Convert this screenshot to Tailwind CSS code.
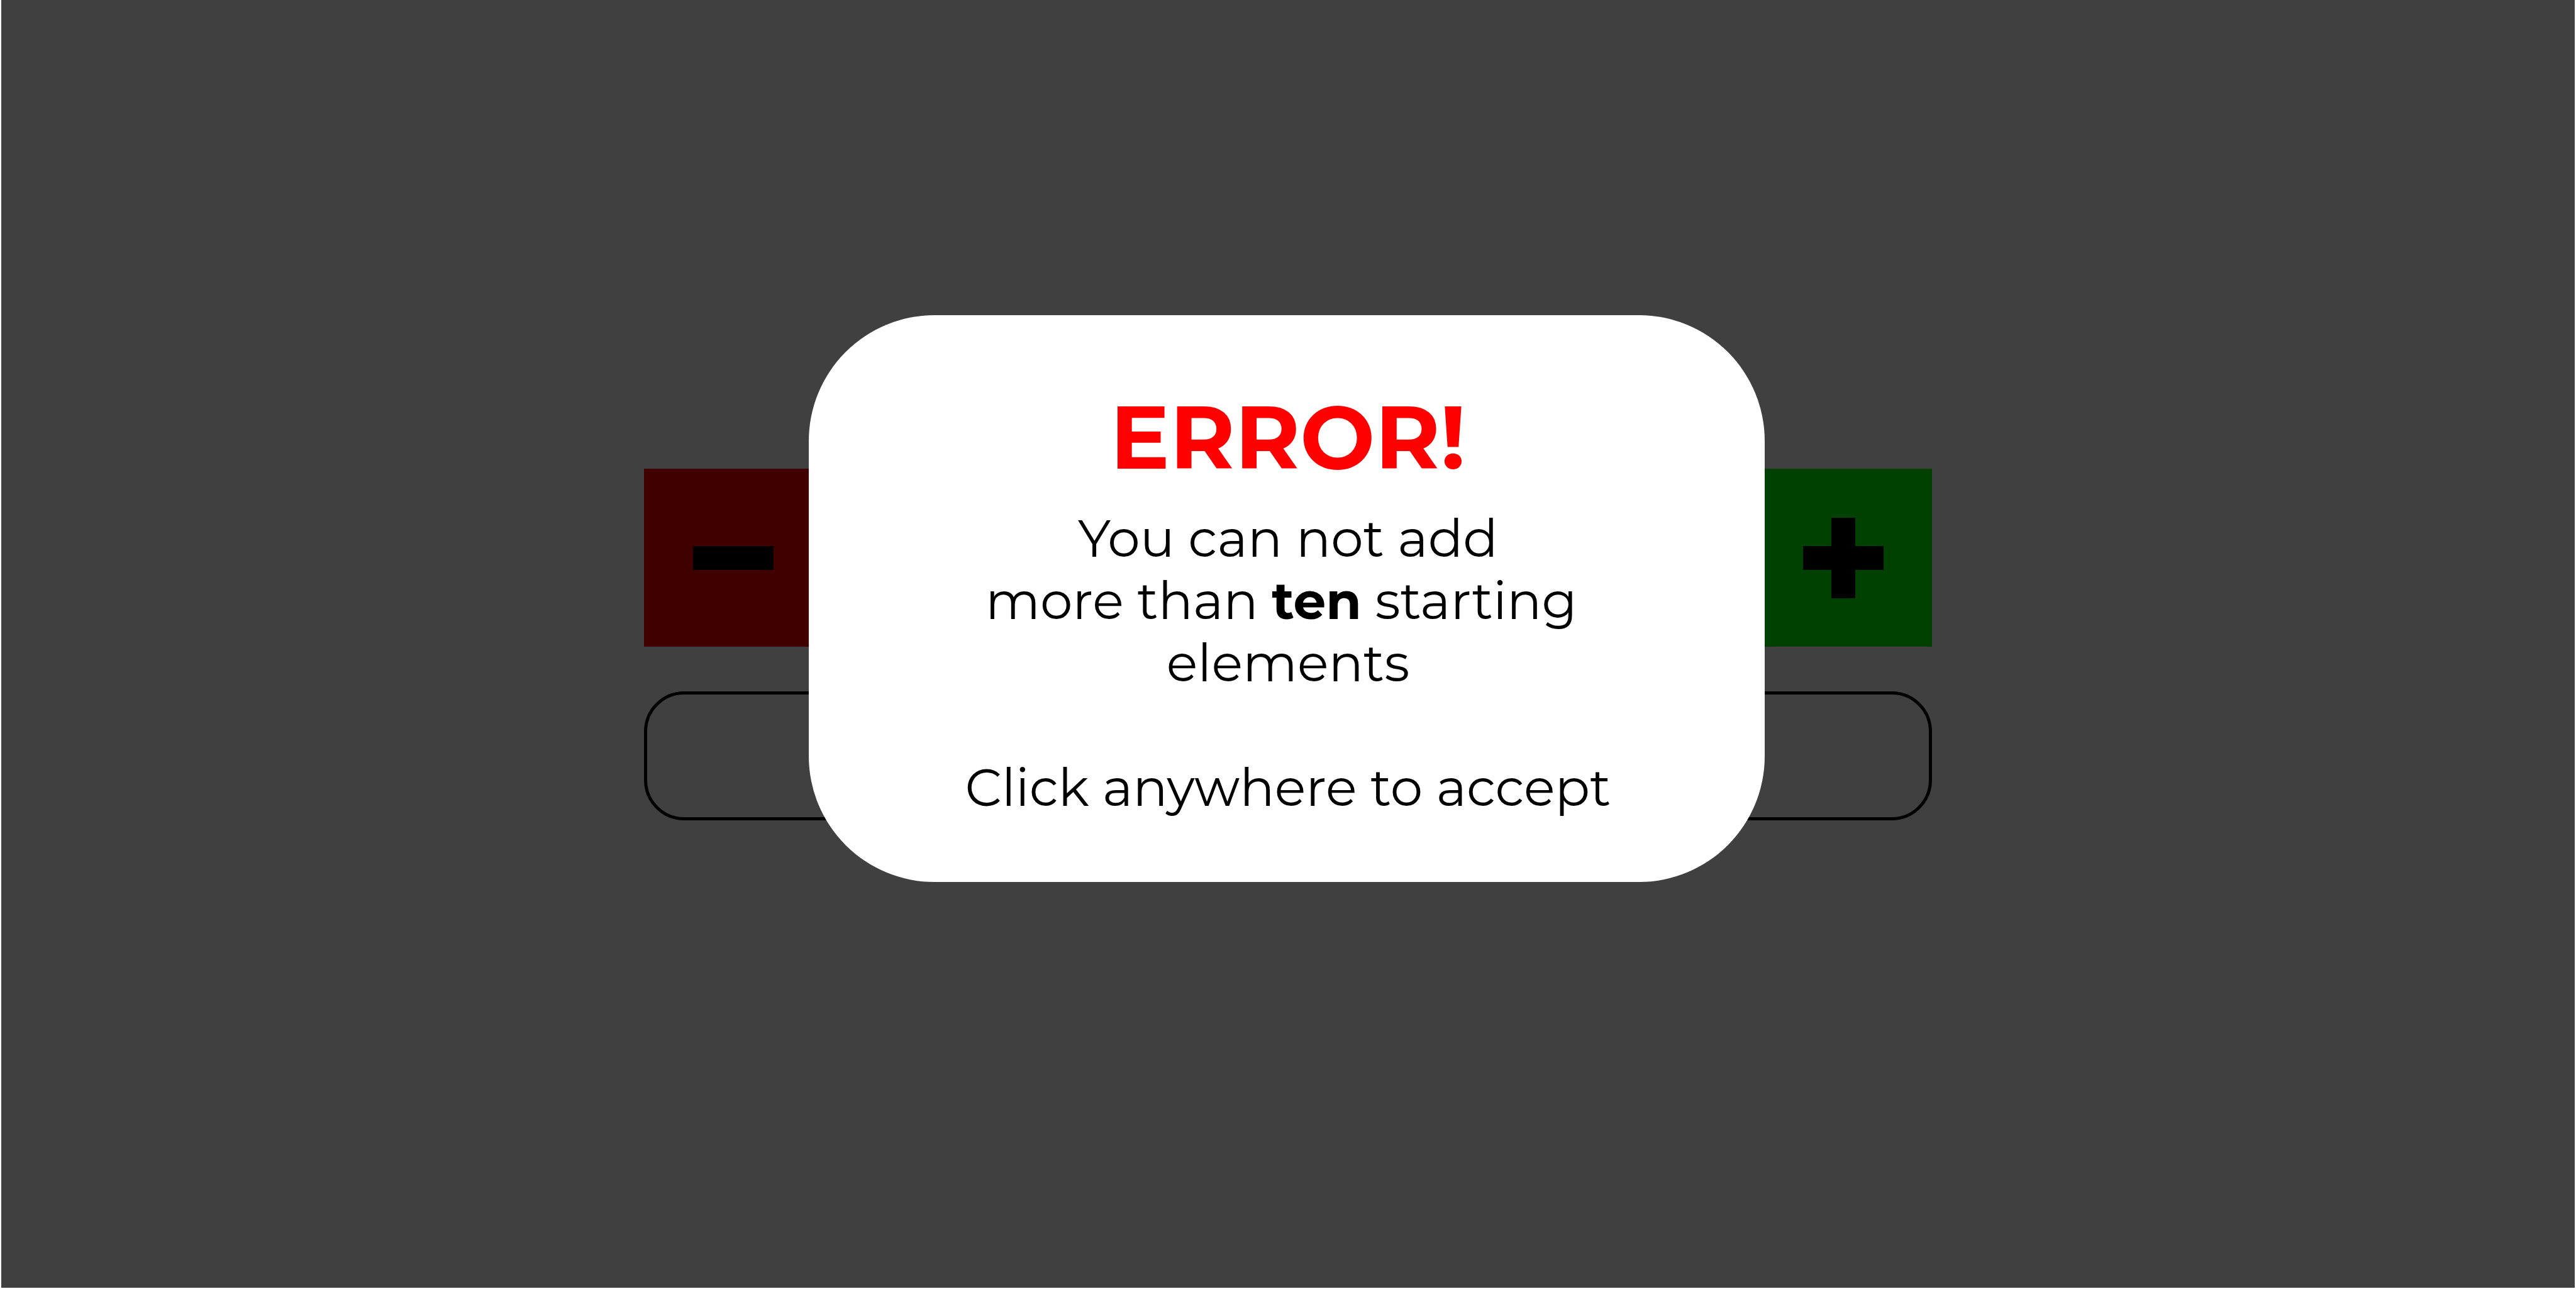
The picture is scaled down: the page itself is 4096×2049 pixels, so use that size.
<!DOCTYPE html>
<html lang="en">
<head>
<meta charset="utf-8">
<title>Starting elements</title>
<script src="https://cdn.jsdelivr.net/npm/@tailwindcss/browser@4"></script>
</head>
<body class="bg-white font-['Montserrat','Inter',sans-serif] text-black">
<main class="flex min-h-screen flex-col items-center justify-center gap-[71px]">
  <div class="flex w-1/2 justify-between">
    <button type="button" aria-label="Remove element" class="flex size-[283px] items-center justify-center bg-[#ff0000]">
      <svg class="size-32" viewBox="0 0 128 128" fill="black" aria-hidden="true"><path d="M0 45h128v38H0z"/></svg>
    </button>
    <button type="button" aria-label="Add element" class="flex size-[283px] items-center justify-center bg-[#00ff00]">
      <svg class="size-32" viewBox="0 0 128 128" fill="black" aria-hidden="true"><path d="M45 0h38v45h45v38H83v45H45V83H0V45h45z"/></svg>
    </button>
  </div>
  <input type="text" aria-label="Starting elements" class="h-[205px] w-1/2 rounded-[64px] border-5 border-black px-16 text-[82px]">
</main>

<!-- Error overlay -->
<div class="fixed inset-x-[2px] top-0 bottom-[2px] flex items-center justify-center bg-black/75 pr-1 pb-[144px]">
  <div role="alertdialog" aria-labelledby="error-title" aria-describedby="error-text" class="w-[1520px] max-w-full rounded-[200px] bg-white pt-[114px] pb-[100px] pl-1 text-center">
    <h1 id="error-title" class="text-[141px] leading-[160px] font-bold text-[#ff0000]">ERROR!</h1>
    <div id="error-text" class="mt-8 text-[82px] leading-[99px]">
      <p>You can not add<br>more than <strong class="font-bold">ten</strong> starting&nbsp;<br>elements</p>
      <p class="mt-[99px]">Click anywhere to accept</p>
    </div>
  </div>
</div>
</body>
</html>
